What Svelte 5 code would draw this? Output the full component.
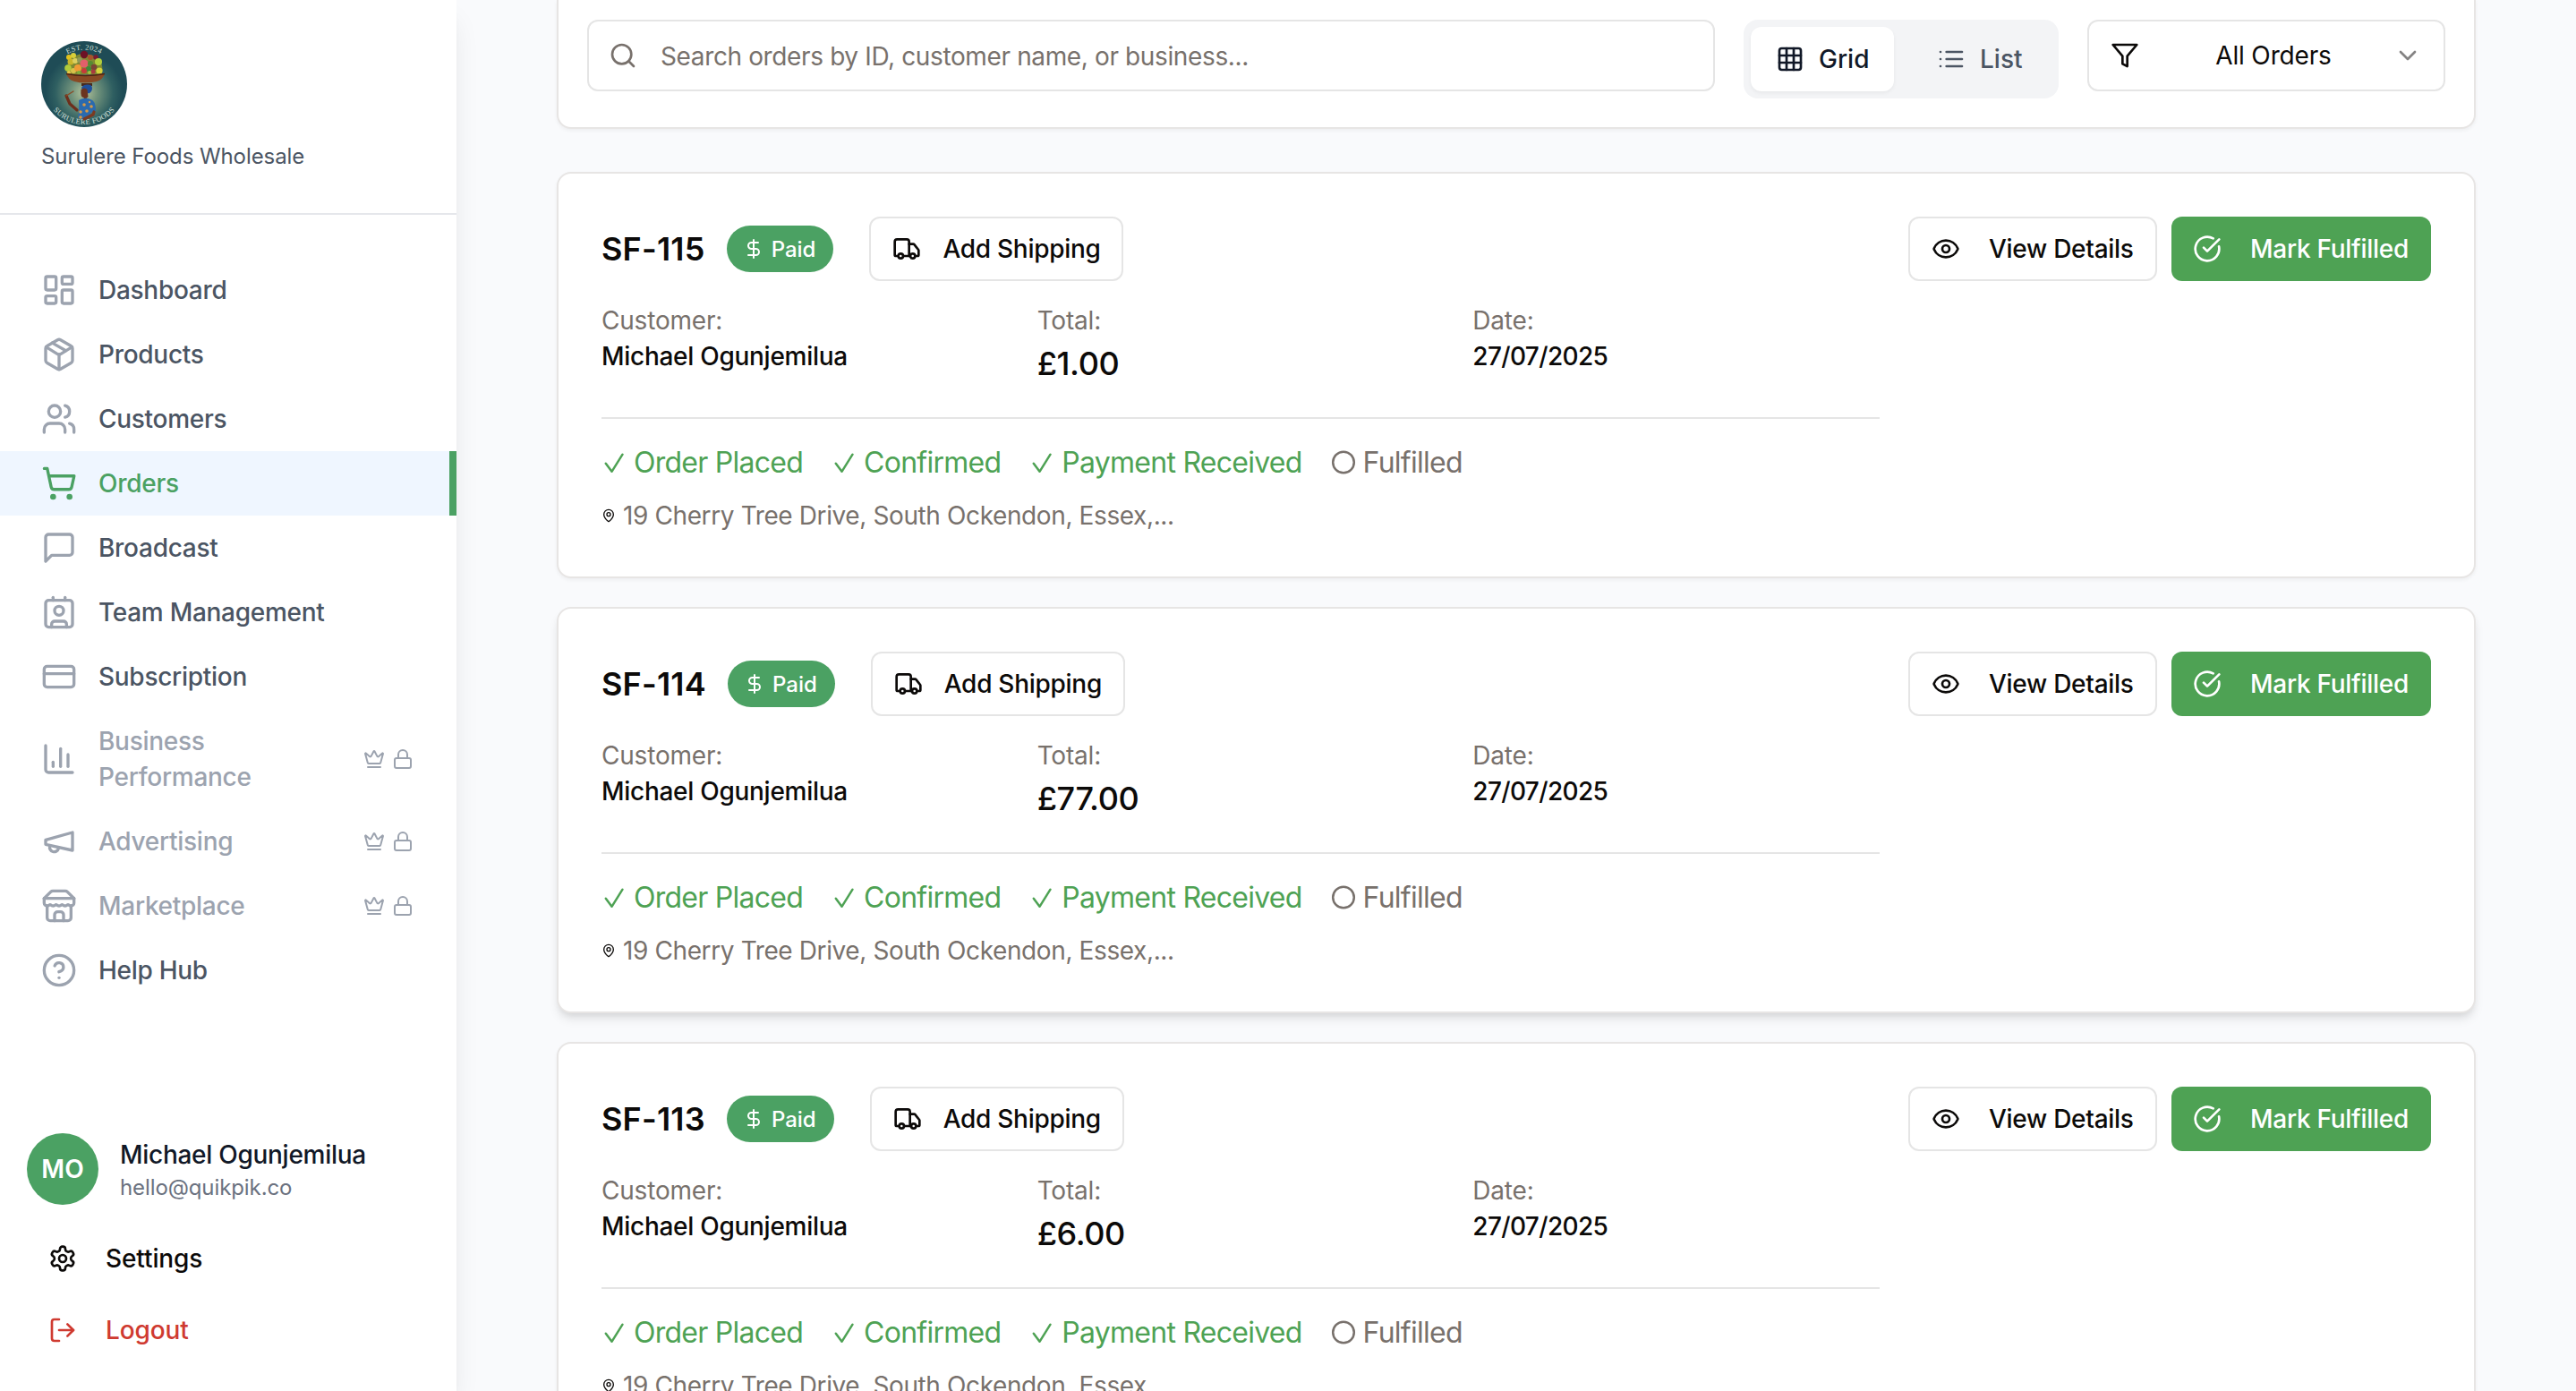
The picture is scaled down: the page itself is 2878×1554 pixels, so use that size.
<script>
  const icons = {
    dashboard: '<rect width="7" height="9" x="3" y="3" rx="1"/><rect width="7" height="5" x="14" y="3" rx="1"/><rect width="7" height="9" x="14" y="12" rx="1"/><rect width="7" height="5" x="3" y="16" rx="1"/>',
    box: '<path d="M11 21.73a2 2 0 0 0 2 0l7-4A2 2 0 0 0 21 16V8a2 2 0 0 0-1-1.73l-7-4a2 2 0 0 0-2 0l-7 4A2 2 0 0 0 3 8v8a2 2 0 0 0 1 1.73z"/><path d="M12 22V12"/><path d="m3.3 7 7.703 4.734a2 2 0 0 0 1.994 0L20.7 7"/><path d="m7.5 4.27 9 5.15"/>',
    users: '<path d="M16 21v-2a4 4 0 0 0-4-4H6a4 4 0 0 0-4 4v2"/><circle cx="9" cy="7" r="4"/><path d="M22 21v-2a4 4 0 0 0-3-3.87"/><path d="M16 3.13a4 4 0 0 1 0 7.75"/>',
    cart: '<circle cx="8" cy="21" r="1"/><circle cx="19" cy="21" r="1"/><path d="M2.05 2.05h2l2.66 12.42a2 2 0 0 0 2 1.58h9.78a2 2 0 0 0 1.95-1.57l1.65-7.43H5.12"/>',
    message: '<path d="M21 15a2 2 0 0 1-2 2H7l-4 4V5a2 2 0 0 1 2-2h14a2 2 0 0 1 2 2z"/>',
    team: '<path d="M16 2v2"/><path d="M7 22v-2a2 2 0 0 1 2-2h6a2 2 0 0 1 2 2v2"/><path d="M8 2v2"/><circle cx="12" cy="11" r="3"/><rect x="3" y="4" width="18" height="18" rx="2"/>',
    card: '<rect width="20" height="14" x="2" y="5" rx="2"/><path d="M2 10h20"/>',
    chart: '<path d="M3 3v16a2 2 0 0 0 2 2h16"/><path d="M18 17V9"/><path d="M13 17V5"/><path d="M8 17v-3"/>',
    megaphone: '<path d="m3 11 18-5v12L3 14v-3z"/><path d="M11.6 16.8a3 3 0 1 1-5.8-1.6"/>',
    store: '<path d="m2 7 4.41-4.41A2 2 0 0 1 7.83 2h8.34a2 2 0 0 1 1.42.59L22 7"/><path d="M4 12v8a2 2 0 0 0 2 2h12a2 2 0 0 0 2-2v-8"/><path d="M15 22v-4a2 2 0 0 0-2-2h-2a2 2 0 0 0-2 2v4"/><path d="M2 7h20"/><path d="M22 7v3a2 2 0 0 1-2 2a2.7 2.7 0 0 1-1.59-.63.7.7 0 0 0-.82 0A2.7 2.7 0 0 1 16 12a2.7 2.7 0 0 1-1.59-.63.7.7 0 0 0-.82 0A2.7 2.7 0 0 1 12 12a2.7 2.7 0 0 1-1.59-.63.7.7 0 0 0-.82 0A2.7 2.7 0 0 1 8 12a2.7 2.7 0 0 1-1.59-.63.7.7 0 0 0-.82 0A2.7 2.7 0 0 1 4 12a2 2 0 0 1-2-2V7"/>',
    help: '<circle cx="12" cy="12" r="10"/><path d="M9.09 9a3 3 0 0 1 5.83 1c0 2-3 3-3 3"/><path d="M12 17h.01"/>',
    crown: '<path d="M11.562 3.266a.5.5 0 0 1 .876 0L15.39 8.87a1 1 0 0 0 1.516.294L21.183 5.5a.5.5 0 0 1 .798.519l-2.834 10.246a1 1 0 0 1-.956.734H5.81a1 1 0 0 1-.957-.734L2.02 6.02a.5.5 0 0 1 .798-.519l4.276 3.664a1 1 0 0 0 1.516-.294z"/><path d="M5 21h14"/>',
    lock: '<rect width="18" height="11" x="3" y="11" rx="2"/><path d="M7 11V7a5 5 0 0 1 10 0v4"/>',
    settings: '<path d="M12.22 2h-.44a2 2 0 0 0-2 2v.18a2 2 0 0 1-1 1.73l-.43.25a2 2 0 0 1-2 0l-.15-.08a2 2 0 0 0-2.73.73l-.22.38a2 2 0 0 0 .73 2.73l.15.1a2 2 0 0 1 1 1.72v.51a2 2 0 0 1-1 1.74l-.15.09a2 2 0 0 0-.73 2.73l.22.38a2 2 0 0 0 2.73.73l.15-.08a2 2 0 0 1 2 0l.43.25a2 2 0 0 1 1 1.73V20a2 2 0 0 0 2 2h.44a2 2 0 0 0 2-2v-.18a2 2 0 0 1 1-1.73l.43-.25a2 2 0 0 1 2 0l.15.08a2 2 0 0 0 2.73-.73l.22-.39a2 2 0 0 0-.73-2.73l-.15-.08a2 2 0 0 1-1-1.74v-.5a2 2 0 0 1 1-1.74l.15-.09a2 2 0 0 0 .73-2.73l-.22-.38a2 2 0 0 0-2.73-.73l-.15.08a2 2 0 0 1-2 0l-.43-.25a2 2 0 0 1-1-1.73V4a2 2 0 0 0-2-2z"/><circle cx="12" cy="12" r="3"/>',
    logout: '<path d="M9 21H5a2 2 0 0 1-2-2V5a2 2 0 0 1 2-2h4"/><path d="m16 17 5-5-5-5"/><path d="M21 12H9"/>',
    search: '<circle cx="11" cy="11" r="8"/><path d="m21 21-4.300-4.300"/>',
    grid: '<rect width="18" height="18" x="3" y="3" rx="2"/><path d="M3 9h18"/><path d="M3 15h18"/><path d="M9 3v18"/><path d="M15 3v18"/>',
    list: '<path d="M3 12h.01"/><path d="M3 18h.01"/><path d="M3 6h.01"/><path d="M8 12h13"/><path d="M8 18h13"/><path d="M8 6h13"/>',
    filter: '<path d="M22 3H2l8 9.460V19l4 2v-8.540L22 3z"/>',
    chevron: '<path d="m6 9 6 6 6-6"/>',
    dollar: '<path d="M12 2v20"/><path d="M17 5H9.500a3.500 3.500 0 0 0 0 7h5a3.500 3.500 0 0 1 0 7H6"/>',
    truck: '<path d="M14 18V6a2 2 0 0 0-2-2H4a2 2 0 0 0-2 2v11a1 1 0 0 0 1 1h2"/><path d="M15 18H9"/><path d="M19 18h2a1 1 0 0 0 1-1v-3.650a1 1 0 0 0-.22-.624l-3.480-4.350A1 1 0 0 0 17.520 8H14"/><circle cx="17" cy="18" r="2"/><circle cx="7" cy="18" r="2"/>',
    eye: '<path d="M2.062 12.348a1 1 0 0 1 0-.696 10.750 10.750 0 0 1 19.876 0 1 1 0 0 1 0 .696 10.750 10.750 0 0 1-19.876 0"/><circle cx="12" cy="12" r="3"/>',
    done: '<path d="M21.801 10A10 10 0 1 1 17 3.335"/><path d="m9 11 3 3L22 4"/>',
    pin: '<path d="M20 10c0 4.993-5.539 10.193-7.399 11.799a1 1 0 0 1-1.202 0C9.539 20.193 4 14.993 4 10a8 8 0 0 1 16 0"/><circle cx="12" cy="10" r="3"/>'
  };

  const nav = [
    { label: 'Dashboard', icon: 'dashboard' },
    { label: 'Products', icon: 'box' },
    { label: 'Customers', icon: 'users' },
    { label: 'Orders', icon: 'cart', active: true },
    { label: 'Broadcast', icon: 'message' },
    { label: 'Team Management', icon: 'team' },
    { label: 'Subscription', icon: 'card' },
    { label: 'Business Performance', icon: 'chart', locked: true },
    { label: 'Advertising', icon: 'megaphone', locked: true },
    { label: 'Marketplace', icon: 'store', locked: true },
    { label: 'Help Hub', icon: 'help' }
  ];

  const orders = [
    { id: 'SF-115', total: '£1.00' },
    { id: 'SF-114', total: '£77.00', raised: true },
    { id: 'SF-113', total: '£6.00' }
  ].map((o) => ({
    ...o,
    customer: 'Michael Ogunjemilua',
    date: '27/07/2025',
    address: '19 Cherry Tree Drive, South Ockendon, Essex,...'
  }));

  const steps = [
    { label: 'Order Placed', done: true },
    { label: 'Confirmed', done: true },
    { label: 'Payment Received', done: true },
    { label: 'Fulfilled', done: false }
  ];

  const fruits = [
    [31, 18, 3, '#e3c21d'], [36, 16, 3, '#d8cf3a'], [33, 23, 3.500, '#c9b52a'], [38, 22, 3, '#dcd060'],
    [48, 15, 4.200, '#6d1226'], [55, 18, 3, '#a8552a'], [61, 18, 2.800, '#7d1b30'], [43, 21, 3, '#8f9a5a'],
    [64, 23, 4, '#b4cf3c'], [30, 30, 3.800, '#b2cc3a'], [36, 33, 3, '#d9c24a'], [41, 30, 4, '#f09a35'],
    [48, 25, 4.600, '#e2606a'], [55, 25, 3, '#568a33'], [53, 31, 3, '#3d8a3a'], [59, 29, 3.300, '#7a4435'],
    [65, 33, 3.600, '#d6d13c'], [48, 33, 3, '#c73a3a'], [42, 35, 2, '#7fae3a'], [58, 34, 2.600, '#a83a3f'],
    [31, 35, 2, '#e8c84a'], [54, 35, 2, '#9fc23f']
  ];
</script>

{#snippet icon(name, size = 'md')}
  <svg class="icon {size}" viewBox="0 0 24 24" aria-hidden="true">{@html icons[name]}</svg>
{/snippet}

<div class="app">
  <aside class="sidebar">
    <header class="brand">
      <svg class="logo" viewBox="0 0 96 96" role="img" aria-label="Surulere Foods">
        <defs>
          <radialGradient id="glow" cx="50%" cy="60%" r="45%">
            <stop offset="0" stop-color="#b4c39b" />
            <stop offset="0.35" stop-color="#6f917b" />
            <stop offset="0.75" stop-color="#2f5f61" />
            <stop offset="1" stop-color="#1f4c56" />
          </radialGradient>
          <path id="arc-top" d="M9.500 48a38.500 38.500 0 0 1 77 0" />
          <path id="arc-bottom" d="M3 48a45 45 0 0 0 90 0" />
        </defs>
        <circle cx="48" cy="48" r="48" fill="url(#glow)" />
        <text class="seal"><textPath href="#arc-top" startOffset="50%" text-anchor="middle">EST. 2024</textPath></text>
        <text class="seal"><textPath href="#arc-bottom" startOffset="50%" text-anchor="middle">SURULERE FOODS</textPath></text>
        <path d="M29 37q-2-10 4-17q8-8 20-5q12 2 15 12q1 6-1 10z" fill="#7f8a32" />
        {#each fruits as [cx, cy, r, fill]}
          <circle {cx} {cy} {r} {fill} />
        {/each}
        <path d="M28 36q21 4 43 0q-2 7-9 9q-13 3-25 0q-7-2-9-9z" fill="#8a4a24" />
        <path d="M28 36.500q21 4 43 0" fill="none" stroke="#4f2412" stroke-width="1.600" />
        <path d="M45 47h12v3h-12z" fill="#4a2a1c" />
        <path d="M45 53q0-4 6-4.500t6 4q0 4-4 6z" fill="#1f4f9c" />
        <path d="M44.500 54q4-3 7 0l1 8-4 4-1-3q-4 0-3-9z" fill="#6b3420" />
        <path d="M40 77l-8-7-4-9" fill="none" stroke="#6d2f1c" stroke-width="3.200" stroke-linecap="round" stroke-linejoin="round" />
        <path d="M28 61l8-5" stroke="#8a4a24" stroke-width="1.400" stroke-linecap="round" />
        <path d="M42 66q7-4 13-1q6 1 6 13l-6 2q1 5-5 8l-9-2q2-9 1-20z" fill="#2b6aae" />
        <path d="M59 79l-1 3-10 5" fill="none" stroke="#7a3a22" stroke-width="3.200" stroke-linecap="round" />
        <circle cx="48" cy="71" r="1.800" fill="#d89a45" /><circle cx="56" cy="73" r="1.800" fill="#d89a45" />
        <circle cx="51" cy="78" r="1.800" fill="#d89a45" /><circle cx="44" cy="79" r="1.800" fill="#d89a45" />
        <circle cx="54" cy="68" r="1.200" fill="#d89a45" /><circle cx="44" cy="85" r="1.800" fill="#d89a45" />
      </svg>
      <p class="company">Surulere Foods Wholesale</p>
    </header>

    <nav>
      {#each nav as item}
        <a class="nav-item" class:active={item.active} class:locked={item.locked}>
          {@render icon(item.icon, 'lg')}
          <span class="nav-label">{item.label}</span>
          {#if item.locked}
            <span class="marks">{@render icon('crown', 'sm')}{@render icon('lock', 'sm')}</span>
          {/if}
        </a>
      {/each}
    </nav>

    <footer class="account">
      <div class="profile">
        <div class="avatar">MO</div>
        <div>
          <p class="name">Michael Ogunjemilua</p>
          <p class="email">hello@quikpik.co</p>
        </div>
      </div>
      <a class="action">{@render icon('settings')}<span>Settings</span></a>
      <a class="action danger">{@render icon('logout')}<span>Logout</span></a>
    </footer>
  </aside>

  <main>
    <section class="filters">
      <div class="search">
        {@render icon('search')}
        <span>Search orders by ID, customer name, or business...</span>
      </div>
      <div class="toggle">
        <button class="on">{@render icon('grid')}<span>Grid</span></button>
        <button>{@render icon('list')}<span>List</span></button>
      </div>
      <div class="select">
        {@render icon('filter')}
        <span class="value">All Orders</span>
        <span class="chev">{@render icon('chevron')}</span>
      </div>
    </section>

    <div class="orders">
      {#each orders as order}
        <article class="order" class:raised={order.raised}>
          <div class="details">
            <div class="head">
              <h3>{order.id}</h3>
              <span class="badge">{@render icon('dollar', 'sm')}<span>Paid</span></span>
              <button class="btn ship">{@render icon('truck')}<span>Add Shipping</span></button>
            </div>
            <dl class="facts">
              <div><dt>Customer:</dt><dd>{order.customer}</dd></div>
              <div><dt>Total:</dt><dd class="total">{order.total}</dd></div>
              <div><dt>Date:</dt><dd class="date">{order.date}</dd></div>
            </dl>
            <ul class="steps">
              {#each steps as step}
                <li class:done={step.done}>
                  {#if step.done}
                    <svg class="mark" viewBox="0 0 28 28"><path d="M4.800 15.800l6.700 9L23.500 5.700" /></svg>
                  {:else}
                    <svg class="mark" viewBox="0 0 28 28"><circle cx="14" cy="14.500" r="11.800" /></svg>
                  {/if}
                  <span>{step.label}</span>
                </li>
              {/each}
            </ul>
            <p class="address">{@render icon('pin', 'xs')}<span>{order.address}</span></p>
          </div>
          <div class="buttons">
            <button class="btn view">{@render icon('eye')}<span>View Details</span></button>
            <button class="btn primary">{@render icon('done')}<span>Mark Fulfilled</span></button>
          </div>
        </article>
      {/each}
    </div>
  </main>
</div>

<style>
  :global(body) {
    margin: 0;
    overflow: hidden;
  }
  * {
    box-sizing: border-box;
  }
  p, h3, dl, dd, ul {
    margin: 0;
    padding: 0;
  }
  button {
    font: inherit;
    color: inherit;
    letter-spacing: inherit;
    border: 0;
    margin: 0;
  }
  .app {
    display: flex;
    height: 1554px;
    overflow: hidden;
    background: #f9fafc;
    color: #0c0a09;
    font-family: Inter, "Liberation Sans", sans-serif;
    font-size: 28px;
    line-height: 40px;
    letter-spacing: -0.28px;
    white-space: nowrap;
  }
  .icon {
    display: block;
    flex: none;
    width: 32px;
    height: 32px;
    fill: none;
    stroke: currentColor;
    stroke-width: 2;
    stroke-linecap: round;
    stroke-linejoin: round;
  }
  .icon.lg { width: 40px; height: 40px; }
  .icon.sm { width: 24px; height: 24px; }
  .icon.xs { width: 16px; height: 16px; }

  .sidebar {
    display: flex;
    flex-direction: column;
    flex: none;
    width: 510px;
    height: 1554px;
    background: #fff;
    box-shadow: 0 20px 30px -6px rgba(0, 0, 0, 0.1), 0 8px 12px -8px rgba(0, 0, 0, 0.1);
  }
  .brand {
    height: 240px;
    padding: 46px 46px 0;
    border-bottom: 2px solid #e5e7eb;
  }
  .logo {
    display: block;
    width: 96px;
    height: 96px;
  }
  .seal {
    font-family: "Liberation Serif", serif;
    font-size: 8.400px;
    letter-spacing: 0.4px;
    fill: #d5e0dc;
  }
  .company {
    margin-top: 17px;
    color: #4b5563;
    font-size: 24px;
    line-height: 32px;
    letter-spacing: -0.08px;
  }
  nav {
    padding-top: 48px;
  }
  .nav-item {
    display: flex;
    align-items: center;
    gap: 24px;
    padding: 16px 48px 16px 46px;
    color: #4b5563;
    font-weight: 500;
  }
  .nav-item .icon {
    color: #9ca3af;
  }
  .nav-label {
    flex: 1;
    white-space: normal;
  }
  .nav-item.active {
    padding-right: 40px;
    border-right: 8px solid #4ba163;
    background: #eff6ff;
    color: #4ba163;
  }
  .nav-item.active .icon {
    color: #4ba163;
  }
  .nav-item.locked {
    color: #9ca3af;
  }
  .marks {
    display: flex;
    gap: 8px;
  }
  .account {
    margin-top: auto;
    padding: 0 30px 28px;
  }
  .profile {
    display: flex;
    align-items: center;
    gap: 24px;
    height: 80px;
    margin-bottom: 20px;
  }
  .avatar {
    display: grid;
    place-items: center;
    width: 80px;
    height: 80px;
    border-radius: 50%;
    background: #4ba163;
    color: #fff;
    font-weight: 600;
    letter-spacing: 0;
  }
  .name {
    color: #111827;
    font-weight: 500;
  }
  .email {
    padding-top: 1px;
    color: #6b7280;
    font-size: 24px;
    line-height: 32px;
    letter-spacing: -0.1px;
  }
  .action {
    display: flex;
    align-items: center;
    gap: 32px;
    height: 80px;
    padding-left: 24px;
    font-weight: 500;
    letter-spacing: -0.1px;
  }
  .danger {
    color: #cf3a30;
  }

  main {
    flex: 1;
    padding: 0 112px;
  }
  .filters {
    display: flex;
    align-items: flex-start;
    height: 144px;
    padding: 22px 32px 0;
    border: 2px solid #e7e5e4;
    border-top: 0;
    border-radius: 0 0 16px 16px;
    background: #fff;
    box-shadow: 0 2px 4px rgba(0, 0, 0, 0.05);
  }
  .search {
    display: flex;
    align-items: center;
    gap: 26px;
    flex: 1;
    height: 80px;
    padding: 0 22px;
    border: 2px solid #e5e5e5;
    border-radius: 12px;
    color: #78716c;
    letter-spacing: -0.37px;
  }
  .search span {
    padding-top: 2px;
  }
  .toggle {
    display: flex;
    justify-content: space-between;
    width: 352px;
    margin: 0 32px;
    padding: 8px;
    border-radius: 16px;
    background: #f3f4f6;
    color: #4b5563;
    font-weight: 500;
    letter-spacing: 0;
  }
  .toggle button {
    display: flex;
    align-items: center;
    gap: 16px;
    width: 156px;
    height: 72px;
    padding: 0 0 0 28px;
    border-radius: 12px;
    background: transparent;
  }
  .toggle .on {
    width: 160px;
    background: #fff;
    color: #111827;
    box-shadow: 0 2px 4px rgba(0, 0, 0, 0.05);
  }
  .select {
    display: flex;
    align-items: center;
    justify-content: space-between;
    width: 400px;
    height: 80px;
    padding: 0 24px;
    border: 2px solid #e5e5e5;
    border-radius: 12px;
    letter-spacing: -0.15px;
  }
  .value {
    padding-left: 16px;
  }
  .chev {
    opacity: 0.5;
  }
  .orders {
    display: grid;
    gap: 32px;
    margin-top: 48px;
  }
  .order {
    display: flex;
    align-items: flex-start;
    justify-content: space-between;
    height: 454px;
    padding: 48px;
    border: 2px solid #e7e5e4;
    border-radius: 16px;
    background: #fff;
    box-shadow: 0 2px 4px rgba(0, 0, 0, 0.05);
  }
  .order.raised {
    box-shadow: 0 8px 12px -2px rgba(0, 0, 0, 0.1), 0 4px 8px -4px rgba(0, 0, 0, 0.1);
  }
  .details {
    width: 1428px;
  }
  .head {
    display: flex;
    align-items: center;
  }
  h3 {
    font-size: 36px;
    font-weight: 600;
    letter-spacing: 0.2px;
  }
  .badge {
    display: flex;
    align-items: center;
    gap: 8px;
    height: 52px;
    margin: 0 40px 0 24px;
    padding: 0 20px 0 18px;
    border-radius: 26px;
    background: #4ba163;
    color: #fff;
    font-size: 24px;
    font-weight: 500;
    letter-spacing: 0;
  }
  .badge span {
    padding-top: 1px;
  }
  .btn {
    display: flex;
    align-items: center;
    gap: 32px;
    height: 72px;
    padding: 0 24px;
    border: 2px solid #e5e5e5;
    border-radius: 12px;
    background: #fff;
    font-weight: 500;
  }
  .btn.ship {
    gap: 24px;
    width: 284px;
  }
  .btn.view {
    width: 278px;
  }
  .btn.primary {
    width: 290px;
    border: 0;
    background: #4ea254;
    color: #fff;
  }
  .buttons {
    display: flex;
    gap: 16px;
  }
  .facts {
    display: grid;
    grid-template-columns: repeat(3, 1fr);
    gap: 32px;
    margin: 24px 0 32px;
  }
  dt {
    color: #78716c;
    letter-spacing: -0.2px;
  }
  dd {
    font-weight: 500;
  }
  .date {
    letter-spacing: -0.65px;
  }
  .total {
    font-size: 36px;
    line-height: 56px;
    letter-spacing: -0.4px;
  }
  .steps {
    display: flex;
    gap: 32px;
    padding-top: 24px;
    border-top: 2px solid #e5e5e5;
    color: #78716c;
    font-size: 32px;
    line-height: 48px;
    letter-spacing: -0.74px;
    list-style: none;
  }
  li {
    display: flex;
    align-items: center;
    gap: 8px;
    height: 48px;
  }
  li span {
    padding-top: 2px;
  }
  .done {
    color: #4ea254;
  }
  .mark {
    width: 28px;
    height: 28px;
    fill: none;
    stroke: currentColor;
    stroke-width: 2.500;
    stroke-linecap: round;
    stroke-linejoin: round;
  }
  .address {
    display: flex;
    align-items: center;
    gap: 8px;
    margin-top: 16px;
    letter-spacing: -0.39px;
  }
  .address span {
    color: #78716c;
  }
</style>
